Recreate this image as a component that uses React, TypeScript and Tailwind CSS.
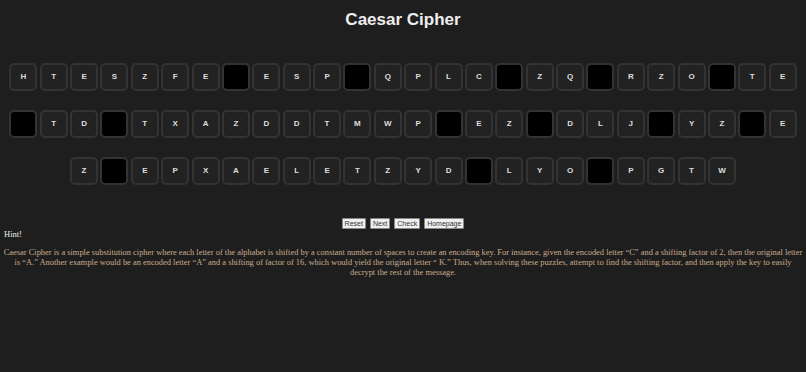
const rows: string[] = [
  'HTESZFE#ESP#QPLC#ZQ#RZO#TE',
  '#TD#TXAZDDTMWP#EZ#DLJ#YZ#E',
  'Z#EPXAELETZYD#LYO#PGTW',
];

function Tile({ ch }: { ch: string }) {
  if (ch === '#') {
    return <div className="w-[28px] h-[28px] mx-[1.2px] rounded-[5px] border-2 border-[#333] bg-black" />;
  }
  return (
    <div className="w-[28px] h-[28px] mx-[1.2px] rounded-[5px] border-2 border-[#333] bg-[#222] flex items-center justify-center text-[8px] font-bold text-[#ddd] font-['Liberation_Sans',Arial,sans-serif]">
      {ch}
    </div>
  );
}

const btn =
  "bg-[#efefef] text-[#333] border border-[#888] rounded-[1px] px-[2px] h-[11px] leading-[9px] text-[7px] font-['Liberation_Sans',Arial,sans-serif]";

export default function App() {
  return (
    <main className="min-h-screen w-full bg-[#1e1e1e] font-['Liberation_Serif','Times_New_Roman',serif] overflow-hidden">
      <h1 className="pt-[9px] text-center text-[17px] leading-[22px] font-bold text-[#eee] font-['Liberation_Sans',Arial,sans-serif]">
        Caesar Cipher
      </h1>

      <div className="mt-[32px] flex flex-col gap-[19px]">
        {rows.map((r, i) => (
          <div key={i} className="flex justify-center">
            {r.split('').map((c, j) => (
              <Tile key={j} ch={c} />
            ))}
          </div>
        ))}
      </div>

      <div className="mt-[33px] flex justify-center gap-[4px]">
        <button className={btn}>Reset</button>
        <button className={btn}>Next</button>
        <button className={btn}>Check</button>
        <button className={btn}>Homepage</button>
      </div>

      <p className="mt-[0px] px-[4px] text-[8.5px] leading-[10px] text-[#eee]">Hint!</p>
      <p className="mt-[8px] px-[3px] text-center text-[8.42px] leading-[10px] text-[#c9ac8c]">
        Caesar Cipher is a simple substitution cipher where each letter of the alphabet is shifted by a constant number of spaces to create an encoding key. For instance, given the encoded letter “C” and a shifting factor of 2, then the original letter is “A.” Another example would be an encoded letter “A” and a shifting of factor of 16, which would yield the original letter “ K.” Thus, when solving these puzzles, attempt to find the shifting factor, and then apply the key to easily decrypt the rest of the message.
      </p>
    </main>
  );
}
